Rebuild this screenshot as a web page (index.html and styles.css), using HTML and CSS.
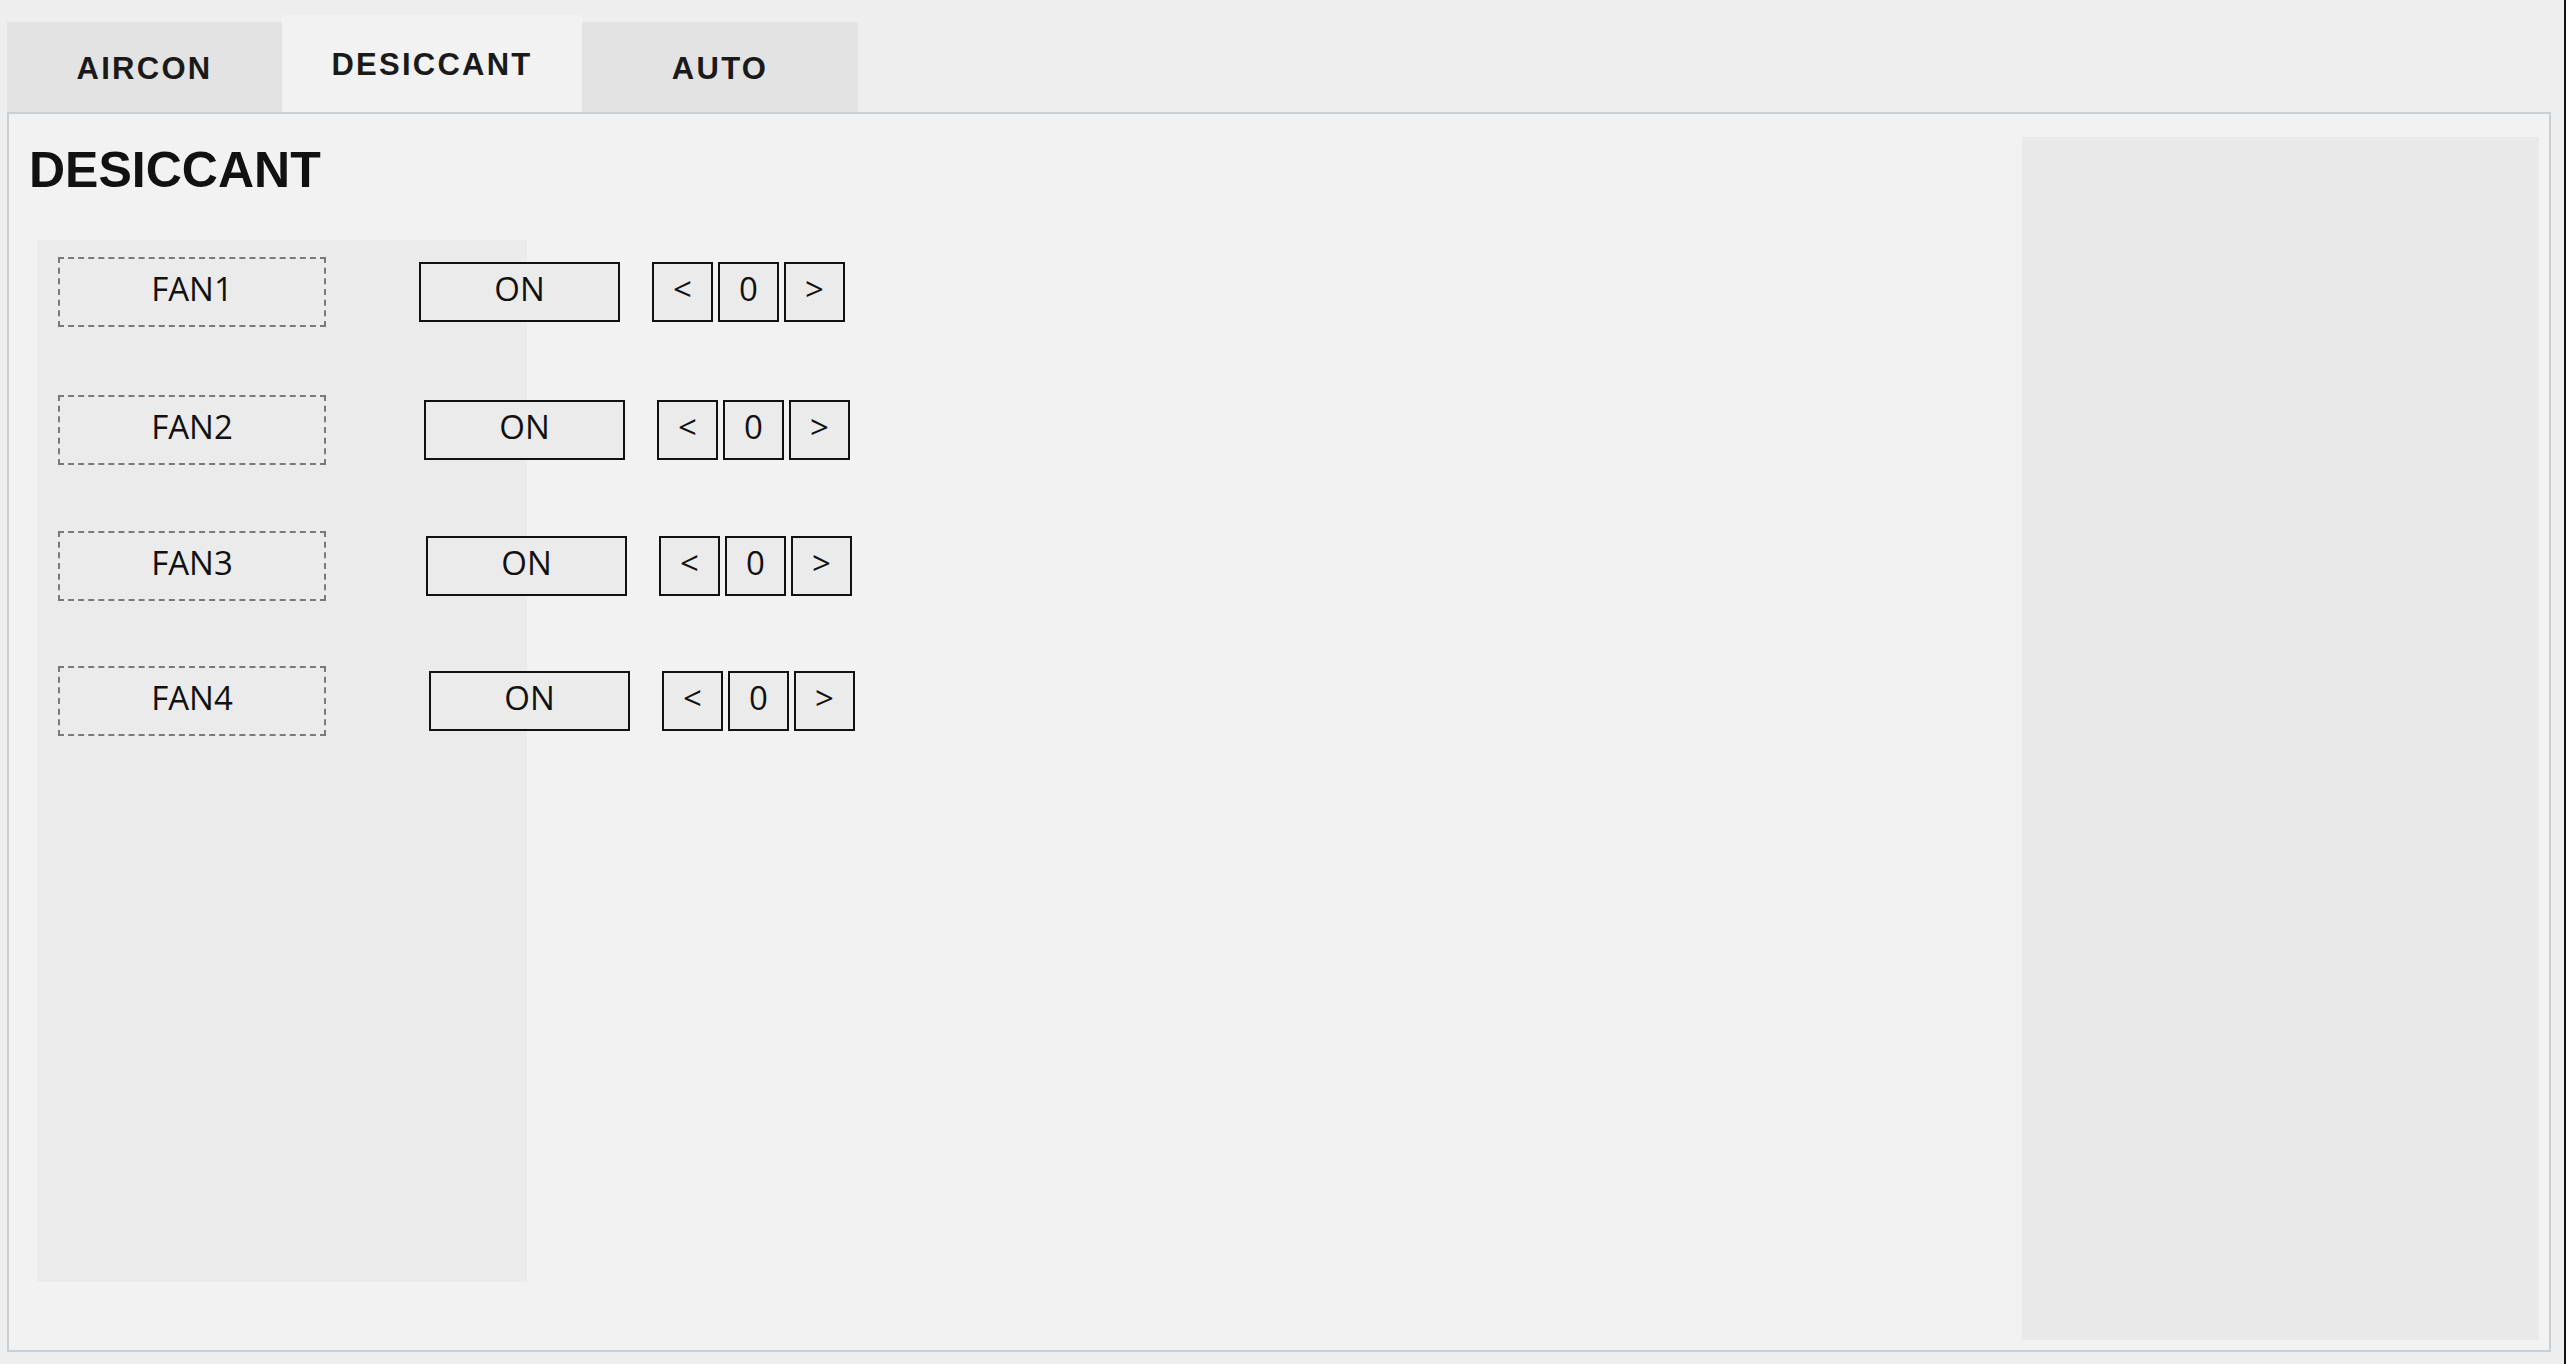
FILE: index.html
```html
<!DOCTYPE html>
<html lang="en">
<head>
<meta charset="utf-8">
<title>DESICCANT</title>
<link rel="stylesheet" href="styles.css">
</head>
<body>
<div class="app">
  <nav class="tabs">
    <div class="tab">AIRCON</div>
    <div class="tab active">DESICCANT</div>
    <div class="tab">AUTO</div>
  </nav>
  <section class="panel">
    <div class="main">
      <h1 class="title">DESICCANT</h1>
      <div class="fan-area">
        <div class="row">
          <div class="fan-label">FAN1</div>
          <div class="ctrls">
            <button class="btn on">ON</button>
            <div class="stepper">
              <button class="btn sq">&lt;</button>
              <div class="btn sq">0</div>
              <button class="btn sq">&gt;</button>
            </div>
          </div>
        </div>
        <div class="row">
          <div class="fan-label">FAN2</div>
          <div class="ctrls">
            <button class="btn on">ON</button>
            <div class="stepper">
              <button class="btn sq">&lt;</button>
              <div class="btn sq">0</div>
              <button class="btn sq">&gt;</button>
            </div>
          </div>
        </div>
        <div class="row">
          <div class="fan-label">FAN3</div>
          <div class="ctrls">
            <button class="btn on">ON</button>
            <div class="stepper">
              <button class="btn sq">&lt;</button>
              <div class="btn sq">0</div>
              <button class="btn sq">&gt;</button>
            </div>
          </div>
        </div>
        <div class="row">
          <div class="fan-label">FAN4</div>
          <div class="ctrls">
            <button class="btn on">ON</button>
            <div class="stepper">
              <button class="btn sq">&lt;</button>
              <div class="btn sq">0</div>
              <button class="btn sq">&gt;</button>
            </div>
          </div>
        </div>
      </div>
    </div>
    <aside class="side"></aside>
  </section>
</div>
</body>
</html>
```

FILE: styles.css
```css
html, body {
  margin: 0;
  padding: 0;
}

body {
  background: #eeeeee;
  height: 1364px;
  overflow: hidden;
  font-family: "Open Sans", "Liberation Sans", sans-serif;
  color: #111111;
}

.app {
  box-sizing: border-box;
  height: 1364px;
  padding: 0 13px 12px 7px;
  border-right: 2px solid #141414;
  display: flex;
  flex-direction: column;
}

/* Tabs */
.tabs {
  display: grid;
  grid-template-columns: 275px 300px 276px;
  align-items: end;
  height: 112px;
  flex: none;
}

.tab {
  box-sizing: border-box;
  height: 90px;
  padding-top: 3px;
  display: flex;
  align-items: center;
  justify-content: center;
  background: #e3e3e3;
  font-family: "Liberation Sans", Arial, sans-serif;
  font-weight: 700;
  font-size: 31px;
  letter-spacing: 2.25px;
  color: #1a1a1a;
}

.tab.active {
  height: 97px;
  background: #f2f2f2;
}

/* Panel */
.panel {
  flex: 1;
  min-height: 0;
  display: flex;
  border: 2px solid #cacfd3;
  background: #f2f2f2;
}

.main {
  flex: 1;
  display: flex;
  flex-direction: column;
  padding: 31px 0 68px 0;
}

.title {
  margin: 0 0 45px 20px;
  font-family: "Liberation Sans", Arial, sans-serif;
  font-weight: 700;
  font-size: 50px;
  line-height: 50px;
  color: #111111;
}

.fan-area {
  flex: 1;
  width: 900px;
  margin-left: 28px;
  padding: 17px 0 0 21px;
  background: linear-gradient(to right, #ebebeb 490px, transparent 490px);
}

.row {
  display: flex;
  align-items: center;
}

.row:nth-child(2) { margin-top: 68px; }
.row:nth-child(3) { margin-top: 66px; }
.row:nth-child(4) { margin-top: 65px; }

.fan-label {
  box-sizing: border-box;
  width: 268px;
  height: 70px;
  padding-bottom: 8px;
  border: 2px dashed #7a7a7a;
  display: flex;
  align-items: center;
  justify-content: center;
  font-family: "Open Sans", sans-serif;
  font-size: 33px;
  color: #111111;
}

.ctrls {
  display: flex;
  align-items: center;
  gap: 32px;
  margin-left: 93px;
}

.row:nth-child(2) .ctrls { margin-left: 98px; }
.row:nth-child(3) .ctrls { margin-left: 100px; }
.row:nth-child(4) .ctrls { margin-left: 103px; }

.btn {
  box-sizing: border-box;
  height: 60px;
  margin: 0;
  padding: 0 0 8px 0;
  border: 2px solid #111111;
  border-radius: 0;
  background: #ebebeb;
  display: flex;
  align-items: center;
  justify-content: center;
  font-family: "Open Sans", sans-serif;
  font-size: 33px;
  color: #111111;
}

.on {
  width: 201px;
}

.stepper {
  display: flex;
  gap: 5px;
}

.sq {
  width: 61px;
}

/* Right side panel */
.side {
  flex: none;
  width: 517px;
  margin: 23px 10px 10px 0;
  background: #e9e9e9;
}
```
